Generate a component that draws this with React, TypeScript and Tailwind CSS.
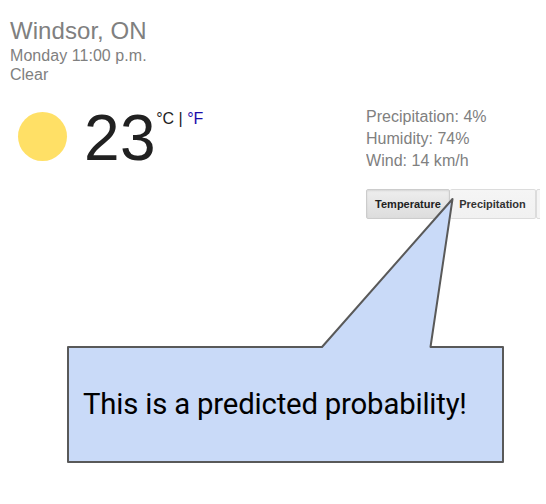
const conditions = ["Precipitation: 4%", "Humidity: 74%", "Wind: 14 km/h"];

export default function App() {
  return (
    <main className="relative h-[504px] w-[546px] overflow-hidden bg-white font-['Liberation_Sans',Arial,sans-serif] text-base text-[#808080]">
      <header className="pl-[10px] pt-[17px]">
        <h1 className="mb-px text-2xl leading-7 tracking-[0.06px]">Windsor, ON</h1>
        <p className="leading-[19px] tracking-[0.05px]">Monday 11:00 p.m.</p>
        <p className="leading-[19px]">Clear</p>
      </header>

      <div className="flex pt-[22px]">
        <section className="flex w-[366px] items-start pl-[18px]">
          <div className="mt-[6px] size-[49px] rounded-full bg-[#ffe066]" />
          <span className="ml-[17px] text-[64px] leading-[64px] tracking-[0.5px] text-[#212121]">23</span>
          <span className="mt-[4px] text-base leading-[18px] whitespace-pre text-[#212121]">
            °C | <a className="text-[#1a0dab]">°F</a>
          </span>
        </section>

        <section className="w-[174px] overflow-hidden">
          {conditions.map((line) => (
            <p key={line} className="leading-[22px] tracking-[0.03px]">{line}</p>
          ))}
          <div className="mt-[17px] flex h-[30px] w-[240px] text-[11px] font-bold">
            <button className="w-[84px] shrink-0 rounded-[2px] border border-[#cccccc] bg-linear-to-b from-[#eeeeee] to-[#dddddd] text-[#212121] shadow-[inset_0_1px_2px_rgba(0,0,0,0.1)]">
              Temperature
            </button>
            <button className="w-[86px] shrink-0 rounded-[2px] border border-l-0 border-[#dcdcdc] bg-linear-to-b from-[#f5f5f5] to-[#f1f1f1] text-[#333333]">
              Precipitation
            </button>
            <button aria-label="Wind" className="w-[60px] shrink-0 rounded-[2px] border border-[#dcdcdc] bg-[#f5f5f5]" />
          </div>
        </section>
      </div>

      <aside className="absolute left-[67px] top-[197px] h-[266px] w-[437px]">
        <svg className="absolute inset-0" width="437" height="266" viewBox="0 0 437 266">
          <path
            d="M1 150H255L385.5 2L363.5 150H436V265H1Z"
            fill="#c9daf8"
            stroke="#595959"
            strokeWidth="2"
            strokeLinejoin="round"
          />
        </svg>
        <p className="relative pl-[16px] pt-[189px] font-[Roboto,sans-serif] text-[29.33px] leading-[36px] tracking-[-0.19px] whitespace-nowrap text-black">
          This is a predicted probability!
        </p>
      </aside>
    </main>
  );
}
